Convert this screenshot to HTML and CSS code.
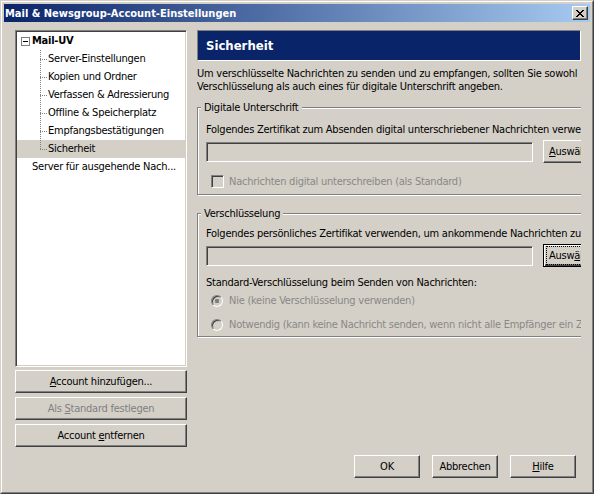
FILE: index.html
```html
<!DOCTYPE html>
<html lang="de">
<head>
<meta charset="utf-8">
<title>Mail &amp; Newsgroup-Account-Einstellungen</title>
<link rel="stylesheet" href="styles.css">
</head>
<body>
<div class="win">
  <div class="frame">
    <div class="titlebar">
      <span class="title">Mail &amp; Newsgroup-Account-Einstellungen</span>
      <span class="close"><svg width="8" height="7" viewBox="0 0 8 7"><path d="M0 0h2v1h1v1h2V1h1V0h2v1H7v1H6v1H5v1h1v1h1v1h1v1H6V6H5V5H3v1H2v1H0V6h1V5h1V4h1V3H2V2H1V1H0z" fill="#000"/></svg></span>
    </div>
    <div class="body">
      <div class="main">
        <div class="left">
          <div class="tree">
            <div class="row root"><span class="minus"></span><b>Mail-UV</b></div>
            <div class="row child"><span class="elbow"></span>Server-Einstellungen</div>
            <div class="row child"><span class="elbow"></span>Kopien und Ordner</div>
            <div class="row child"><span class="elbow"></span>Verfassen &amp; Adressierung</div>
            <div class="row child"><span class="elbow"></span>Offline &amp; Speicherplatz</div>
            <div class="row child"><span class="elbow"></span>Empfangsbestätigungen</div>
            <div class="row child last selected"><span class="elbow"></span>Sicherheit</div>
            <div class="row server">Server für ausgehende Nach...</div>
          </div>
          <button class="btn wide first"><u>A</u>ccount hinzufügen...</button>
          <button class="btn wide disabled">Als <u>S</u>tandard festlegen</button>
          <button class="btn wide">Account <u>e</u>ntfernen</button>
        </div>
        <div class="right">
          <div class="header">Sicherheit</div>
          <p class="desc">Um verschlüsselte Nachrichten zu senden und zu empfangen, sollten Sie sowohl<br>Verschlüsselung als auch eines für digitale Unterschrift angeben.</p>
          <fieldset class="group g1">
            <legend>Digitale Unterschrift</legend>
            <div class="line">Folgendes Zertifikat zum Absenden digital unterschriebener Nachrichten verwenden:</div>
            <div class="certrow">
              <span class="field"></span>
              <button class="btn pick"><span class="lbl"><u>A</u>uswählen...</span></button>
            </div>
            <div class="opt check-row dis"><span class="cb"></span>Nachrichten digital unterschreiben (als Standard)</div>
          </fieldset>
          <fieldset class="group g2">
            <legend>Verschlüsselung</legend>
            <div class="line">Folgendes persönliches Zertifikat verwenden, um ankommende Nachrichten zu entschlüsseln:</div>
            <div class="certrow">
              <span class="field"></span>
              <button class="btn pick focus"><span class="lbl">Ausw<u>ä</u>hlen...</span></button>
            </div>
            <div class="line std">Standard-Verschlüsselung beim Senden von Nachrichten:</div>
            <div class="opt radio-row dis r1"><span class="rb on"></span>Nie (keine Verschlüsselung verwenden)</div>
            <div class="opt radio-row dis r2"><span class="rb"></span>Notwendig (kann keine Nachricht senden, wenn nicht alle Empfänger ein Zertifikat haben)</div>
          </fieldset>
        </div>
      </div>
      <div class="footer">
        <button class="btn foot">OK</button>
        <button class="btn foot">Abbrechen</button>
        <button class="btn foot"><u>H</u>ilfe</button>
      </div>
    </div>
  </div>
</div>
</body>
</html>
```
FILE: styles.css
```css
html, body {
  margin: 0;
  padding: 0;
  background: #d4d0c8;
}
body {
  font-family: "DejaVu Sans Condensed", "DejaVu Sans", "Liberation Sans", sans-serif;
  font-stretch: condensed;
  font-size: 11px;
  letter-spacing: -0.25px;
  color: #000;
}
.win {
  width: 594px;
  height: 494px;
  box-sizing: border-box;
  border: 1px solid;
  border-color: #d4d0c8 #404040 #404040 #d4d0c8;
}
.frame {
  height: 100%;
  box-sizing: border-box;
  border: 1px solid;
  border-color: #fff #808080 #808080 #fff;
  padding: 2px;
  display: flex;
  flex-direction: column;
}
.titlebar {
  height: 18px;
  flex: none;
  background: linear-gradient(to right, #0a246a, #a6caf0);
  display: flex;
  align-items: center;
  justify-content: space-between;
  padding-left: 1px;
}
.title {
  color: #fff;
  font-weight: bold;
  font-size: 11px;
  letter-spacing: 0;
  white-space: nowrap;
}
.close {
  width: 16px;
  height: 14px;
  box-sizing: border-box;
  background: #d4d0c8;
  border: 1px solid;
  border-color: #fff #404040 #404040 #fff;
  box-shadow: inset -1px -1px #808080;
  margin-right: 2px;
  display: flex;
  align-items: center;
  justify-content: center;
}
.close svg { display: block; }
.body {
  padding: 8px 0 0 11px;
}
.main {
  display: flex;
  gap: 10px;
  height: 417px;
}
.left {
  width: 172px;
  flex: none;
  display: flex;
  flex-direction: column;
}
.tree {
  height: 337px;
  box-sizing: border-box;
  background: #fff;
  border: 1px solid;
  border-color: #808080 #fff #fff #808080;
  box-shadow: inset 1px 1px #404040, inset -1px -1px #d4d0c8;
  padding: 1px;
}
.row {
  height: 18px;
  line-height: 18px;
  display: flex;
  align-items: center;
  white-space: nowrap;
}
.root { padding-left: 4px; }
.root b { font-weight: bold; }
.minus {
  width: 9px;
  height: 9px;
  box-sizing: border-box;
  border: 1px solid #808080;
  background: linear-gradient(#000, #000) center / 5px 1px no-repeat, #fff;
  margin-right: 2px;
}
.elbow {
  width: 8px;
  height: 18px;
  margin-left: 23px;
  flex: none;
  background:
    repeating-linear-gradient(to bottom, #808080 0 1px, transparent 1px 2px) left top / 1px 100% no-repeat,
    repeating-linear-gradient(to right, #808080 0 1px, transparent 1px 2px) left 9px / 8px 1px no-repeat;
}
.last .elbow {
  background:
    repeating-linear-gradient(to bottom, #808080 0 1px, transparent 1px 2px) left top / 1px 10px no-repeat,
    repeating-linear-gradient(to right, #808080 0 1px, transparent 1px 2px) left 9px / 8px 1px no-repeat;
}
.selected { background: #d4d0c8; }
.server { padding-left: 15px; }

.btn {
  font: inherit;
  letter-spacing: inherit;
  color: #000;
  background: #d4d0c8;
  border: 1px solid;
  border-color: #fff #404040 #404040 #fff;
  box-shadow: inset -1px -1px #808080;
  height: 23px;
  padding: 0;
  margin: 0;
  box-sizing: border-box;
  white-space: nowrap;
}
.btn u { text-decoration: underline; text-underline-offset: 1px; }
.wide { width: 172px; margin-top: 4px; }
.wide.first { margin-top: 3px; }
.btn.disabled { color: #808080; }

.right {
  width: 384px;
  flex: none;
  overflow: hidden;
}
.header {
  height: 31px;
  box-sizing: border-box;
  background: #0a246a;
  color: #fff;
  border: 1px solid;
  border-color: #808080 #fff #fff #808080;
  font-weight: bold;
  font-size: 13px;
  letter-spacing: 0;
  padding-left: 8px;
  display: flex;
  align-items: center;
}
.desc {
  margin: 6px 0 0;
  line-height: 13px;
  white-space: nowrap;
}
.group {
  margin: 8px 0 0;
  padding: 0 0 6px 8px;
  width: 520px;
  min-width: 0;
  box-sizing: border-box;
  border: 1px solid #808080;
  box-shadow: inset 1px 1px #fff, 1px 1px #fff;
}
.group legend {
  padding: 0 3px;
  margin-left: -5px;
  line-height: 13px;
  background: #d4d0c8;
}
.g2 { margin-top: 12px; padding-bottom: 5px; }
.line {
  line-height: 13px;
  white-space: nowrap;
  margin-top: 9px;
}
.g2 .line { margin-top: 7px; }
.g2 .line.std { margin-top: 9px; }
.certrow {
  display: flex;
  align-items: center;
  gap: 10px;
  margin-top: 4px;
}
.field {
  width: 327px;
  height: 20px;
  flex: none;
  box-sizing: border-box;
  border: 1px solid;
  border-color: #808080 #fff #fff #808080;
  box-shadow: inset 1px 1px #404040, inset -1px -1px #d4d0c8;
  background: #d4d0c8;
}
.pick {
  width: 80px;
  flex: none;
  text-align: left;
  padding-left: 5px;
}
.pick.focus {
  border-color: #000;
  box-shadow: inset 1px 1px #fff, inset -1px -1px #404040, inset -2px -2px #808080;
  padding-left: 2px;
}
.pick.focus .lbl {
  display: inline-block;
  border: 1px dotted #000;
  padding: 2px;
  line-height: 13px;
}
.opt {
  display: flex;
  align-items: center;
  height: 13px;
  line-height: 13px;
  white-space: nowrap;
  padding-left: 5px;
}
.dis { color: #8a8884; }
.check-row { margin-top: 12px; }
.cb {
  width: 13px;
  height: 13px;
  box-sizing: border-box;
  flex: none;
  border: 1px solid;
  border-color: #808080 #fff #fff #808080;
  box-shadow: inset 1px 1px #404040, inset -1px -1px #d4d0c8;
  background: #d4d0c8;
  margin-right: 5px;
}
.rb {
  width: 12px;
  height: 12px;
  box-sizing: border-box;
  flex: none;
  border-radius: 50%;
  border: 1px solid;
  border-color: #808080 #fff #fff #808080;
  box-shadow: inset 1px 1px #404040;
  background: #d4d0c8;
  margin-right: 6px;
}
.rb.on {
  background: radial-gradient(circle, #808080 0 2px, transparent 2.5px), #d4d0c8;
}
.r1 { margin-top: 5px; }
.r2 { margin-top: 11px; }

.footer {
  display: flex;
  justify-content: flex-end;
  gap: 12px;
  padding-right: 14px;
  margin-top: 8px;
}
.foot { width: 66px; }
```
